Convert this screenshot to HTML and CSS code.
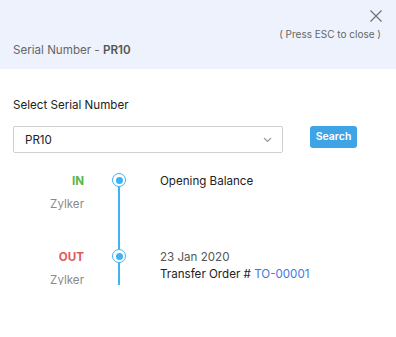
FILE: index.html
```html
<!DOCTYPE html>
<html>
<head>
<meta charset="utf-8">
<link rel="stylesheet" href="styles.css">
</head>
<body>
<div class="modal">
  <div class="header">
    <div class="close-row">
      <svg class="close" width="12" height="12" viewBox="0 0 12 12"><path d="M0.5 0.5L11.5 11.5M11.5 0.5L0.5 11.5" stroke="#6f6f6f" stroke-width="1.2" fill="none"/></svg>
    </div>
    <div class="esc">( Press ESC to close )</div>
    <div class="title">Serial Number - <b>PR10</b></div>
  </div>
  <div class="body">
    <div class="label">Select Serial Number</div>
    <div class="controls">
      <div class="select">
        <span>PR10</span>
        <svg class="chev" width="9" height="6" viewBox="0 0 9 6"><path d="M1 1L4.5 4.5L8 1" stroke="#9a9a9a" stroke-width="1.2" fill="none"/></svg>
      </div>
      <button class="search">Search</button>
    </div>
    <div class="timeline">
      <div class="entry first">
        <div class="left">
          <div class="type in">IN</div>
          <div class="who">Zylker</div>
        </div>
        <div class="rail"><span class="dot"></span><span class="line"></span></div>
        <div class="right">
          <div class="main">Opening Balance</div>
        </div>
      </div>
      <div class="entry last">
        <div class="left">
          <div class="type out">OUT</div>
          <div class="who">Zylker</div>
        </div>
        <div class="rail"><span class="dot"></span><span class="line"></span></div>
        <div class="right">
          <div class="date">23 Jan 2020</div>
          <div class="main">Transfer Order # <a class="link">TO-00001</a></div>
        </div>
      </div>
    </div>
  </div>
</div>
</body>
</html>
```
FILE: styles.css
```css
* { box-sizing: border-box; }
body {
  margin: 0;
  background: #fff;
  font-family: Inter, "Noto Sans", sans-serif;
  color: #222;
  font-size: 11.6px;
}
.header {
  background: #edf2fc;
  height: 69px;
  padding: 10px 14px 0 13px;
}
.close-row {
  display: flex;
  justify-content: flex-end;
  height: 12px;
}
.close { display: block; }
.esc {
  text-align: right;
  font-size: 10px;
  line-height: 12px;
  color: #666;
  margin-top: 6px;
  margin-right: 1px;
}
.title {
  font-size: 11.6px;
  line-height: 16px;
  color: #666;
  margin-top: 2px;
}
.title b { color: #555; font-weight: 600; }
.body { padding: 28px 13px 0 13px; }
.label { line-height: 16px; color: #222; }
.controls {
  display: flex;
  align-items: flex-start;
  margin-top: 13px;
}
.select {
  width: 270px;
  height: 27px;
  border: 1px solid #cfcfcf;
  border-radius: 2px;
  display: flex;
  align-items: center;
  justify-content: space-between;
  padding: 0 10px 0 11px;
  color: #222;
}
.chev { display: block; }
.search {
  margin-left: 27px;
  height: 22px;
  width: 47px;
  border: none;
  border-radius: 3px;
  background: #3fa4e6;
  color: #fff;
  font-family: inherit;
  font-size: 10.5px;
  font-weight: 600;
  padding: 0;
  line-height: 22px;
}
.timeline { margin-top: 20px; }
.entry { display: flex; }
.entry.first { height: 76px; }
.entry.last { height: 36px; }
.left {
  width: 71px;
  text-align: right;
}
.type { font-weight: 700; line-height: 16px; }
.in { color: #5db546; }
.out { color: #e25858; }
.who { color: #8a8a8a; margin-top: 7px; line-height: 16px; }
.rail {
  width: 70px;
  display: flex;
  flex-direction: column;
  align-items: center;
}
.dot {
  width: 14px;
  height: 14px;
  border: 1.5px solid #3fb2f4;
  border-radius: 50%;
  background: #fff;
  position: relative;
  flex: none;
}
.dot::after {
  content: "";
  position: absolute;
  left: 50%; top: 50%;
  width: 7px; height: 7px;
  margin: -3.5px 0 0 -3.5px;
  border-radius: 50%;
  background: #3fb2f4;
}
.line {
  width: 1.5px;
  flex: 1;
  background: #3fb2f4;
}
.right { padding-left: 6px; }
.main { line-height: 16px; color: #222; }
.date { color: #555; line-height: 16px; margin-bottom: 1px; }
.link { color: #3f78df; text-decoration: none; }
```
